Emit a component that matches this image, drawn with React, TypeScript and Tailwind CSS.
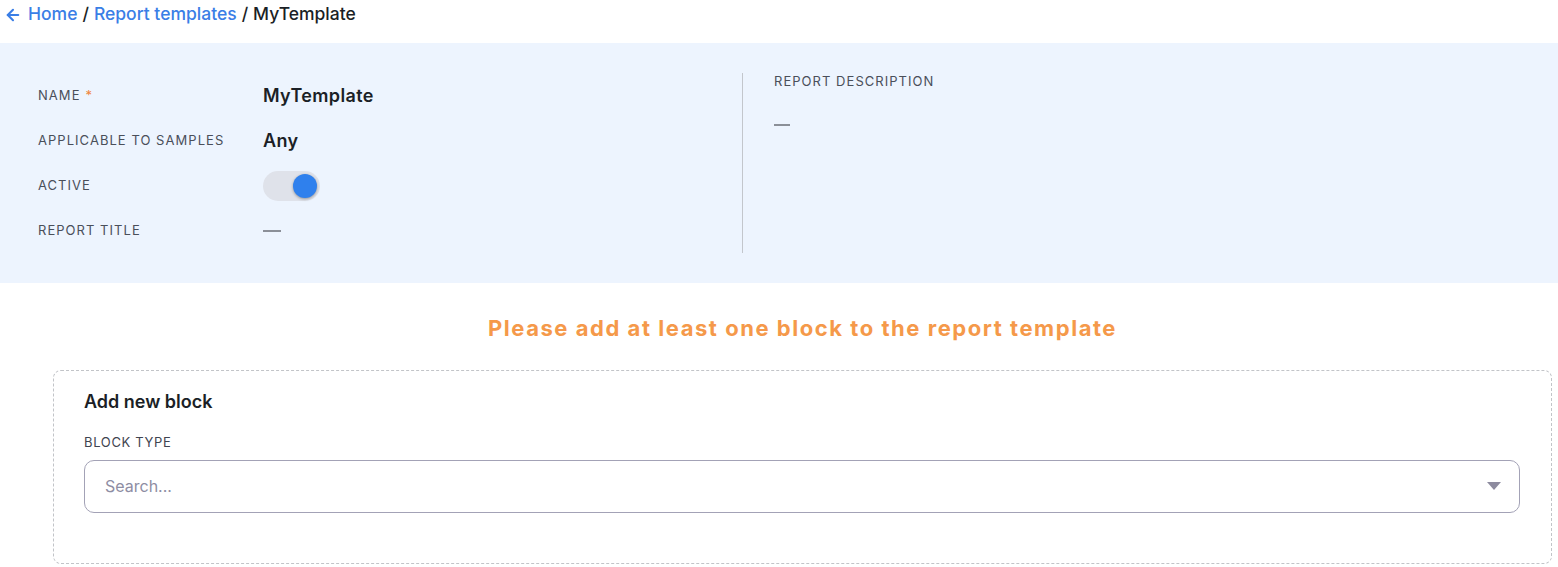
import { ArrowLeft } from 'lucide-react';

const fields = [
  { label: 'Name', required: true, value: 'MyTemplate' },
  { label: 'Applicable to samples', value: 'Any' },
  { label: 'Active', toggle: true },
  { label: 'Report title', empty: true },
];

function Toggle() {
  return (
    <div className="relative h-[30px] w-[57px] rounded-full bg-[#dfe2ea]">
      <div className="absolute right-[3px] top-[3px] h-[24px] w-[24px] rounded-full bg-[#2f80ed] shadow-[0_1px_3px_rgba(0,0,0,0.35)]" />
    </div>
  );
}

export default function App() {
  return (
    <div className="min-h-screen bg-white font-['Inter',sans-serif] text-[#1b1f26]">
      {/* Breadcrumb */}
      <nav className="flex h-[29px] items-center pl-[4px] text-[17.5px] font-medium">
        <ArrowLeft className="mr-[6px] h-[18px] w-[18px] text-[#3a7ee6]" strokeWidth={2.8} />
        <a className="text-[#3a7ee6]">Home</a>
        <span className="mx-[5px]">/</span>
        <a className="text-[#3a7ee6]">Report templates</a>
        <span className="mx-[5px]">/</span>
        <span>MyTemplate</span>
      </nav>

      {/* Summary panel */}
      <section className="mt-[14px] flex bg-[#edf4fe] py-[30px]">
        <div className="w-[743px] border-r border-[#c3c6cc] pl-[38px]">
          {fields.map((f) => (
            <div key={f.label} className="flex h-[45px] items-center">
              <div className="w-[225px] text-[13px] uppercase tracking-[0.08em] text-[#4a4f5a]">
                {f.label}
                {f.required && <span className="ml-[5px] text-[#f0843c]">*</span>}
              </div>
              {f.toggle ? (
                <Toggle />
              ) : f.empty ? (
                <span className="block h-[2px] w-[18px] bg-[#8b8f98]" />
              ) : (
                <span className="text-[18px] font-semibold tracking-[0.02em]">{f.value}</span>
              )}
            </div>
          ))}
        </div>
        <div className="pl-[31px]">
          <div className="-mt-[1px] text-[13px] uppercase tracking-[0.08em] text-[#4a4f5a]">
            Report description
          </div>
          <span className="mt-[32px] block h-[2px] w-[16px] bg-[#8b8f98]" />
        </div>
      </section>

      {/* Blocks */}
      <div className="ml-[53px] mr-[6px]">
        <p className="mt-[29px] text-center text-[22px] font-bold tracking-[0.07em] text-[#f5994a]">
          Please add at least one block to the report template
        </p>
        <div className="mt-[25px] rounded-[8px] border border-dashed border-[#c2c4c8] pb-[50px] pl-[30px] pr-[31px] pt-[17px]">
          <h3 className="text-[18px] font-semibold">Add new block</h3>
          <div className="mt-[18px] text-[13px] uppercase tracking-[0.05em] text-[#3f4450]">Block type</div>
          <div className="mt-[7px] flex h-[53px] items-center justify-between rounded-[10px] border border-[#a3a2b6] pl-[20px] pr-[18px]">
            <span className="text-[16px] text-[#8e8da3]">Search...</span>
            <svg width="14" height="8" viewBox="0 0 14 8">
              <path d="M0 0h14L7 8z" fill="#8d8b9f" />
            </svg>
          </div>
        </div>
      </div>
    </div>
  );
}
